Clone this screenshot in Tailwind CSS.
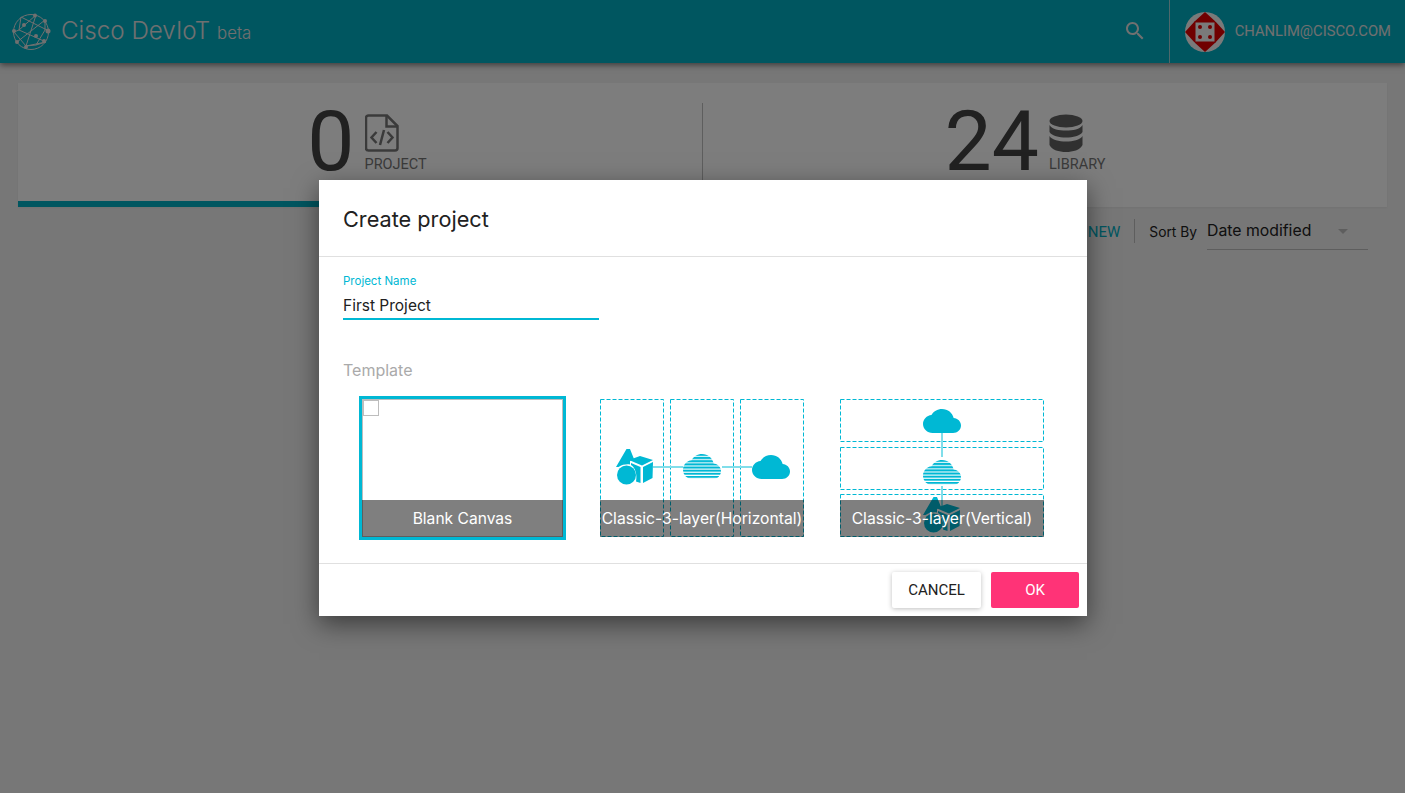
<!DOCTYPE html>
<html lang="en">

<head>
  <meta charset="UTF-8">
  <title>Cisco DevIoT</title>
  <script src="https://cdn.jsdelivr.net/npm/@tailwindcss/browser@4"></script>
</head>

<body class="bg-[#eeeeee] font-['Roboto',sans-serif] text-[#212121]">
  <!-- shared icons -->
  <svg class="absolute w-0 h-0">
    <defs>
      <pattern id="stripes" width="24" height="2" patternUnits="userSpaceOnUse">
        <rect width="24" height="1.300" fill="#00b8d4"></rect>
      </pattern>
      <symbol id="cloud" viewBox="0 4 24 16" preserveAspectRatio="none">
        <path d="M19.35 10.04C18.67 6.59 15.64 4 12 4 9.11 4 6.6 5.64 5.35 8.04 2.34 8.36 0 10.91 0 14c0 3.31 2.69 6 6 6h13c2.76 0 5-2.24 5-5 0-2.64-2.05-4.78-4.65-4.96z"></path>
      </symbol>
      <symbol id="things" viewBox="0 0 38 36">
        <path d="M10.500 0 14 0 18 10 14 12 14 15.500C11 15 6 15.500 2.500 18H0Z"></path>
        <circle cx="10.500" cy="26" r="9.500"></circle>
        <path d="M13 11 24 7 37 11 26 16.500Z"></path>
        <path d="M15 14 24.500 18V34L20 32.500C21.500 25 19 18.500 15 16Z"></path>
        <path d="M27 18 37 13 36.500 29 27 34Z"></path>
      </symbol>
    </defs>
  </svg>

  <div class="h-[793px] w-[1405px] overflow-hidden relative">
    <header class="h-[63px] bg-[#00acc1] flex items-center shadow-[0_2px_6px_rgba(0,0,0,0.5)]">
      <svg class="w-[40px] h-[40px] ml-[11px]" viewBox="0 0 40 40" fill="none" stroke="#e0e0e0" stroke-width="1">
        <circle cx="20" cy="20" r="17.500"></circle>
        <path d="M10 5 36 18M25 3 8 18 3 20 15 34 25 3M8 18 35 30 15 34M34 8 34 18 25 33 15 34M6 30 34 8M25 33 35 30M10 5 8 18"></path>
        <g fill="#e0e0e0" stroke="none">
          <circle cx="13" cy="13" r="2"></circle><circle cx="24" cy="3.500" r="2"></circle><circle cx="34" cy="9" r="2"></circle><circle cx="37" cy="19" r="2.500"></circle><circle cx="3" cy="19" r="2"></circle><circle cx="25" cy="24" r="2"></circle><circle cx="33" cy="29" r="2"></circle><circle cx="15" cy="35" r="2"></circle><circle cx="6" cy="30" r="2"></circle>
        </g>
      </svg>
      <div class="ml-[10px] text-[24.200px] text-[#e0e0e0] font-['Inter',sans-serif] font-light">Cisco DevIoT</div>
      <div class="ml-[7px] mt-[4px] text-[16.800px] text-[#e0e0e0] font-['Inter',sans-serif] font-light">beta</div>
      <svg class="w-[24px] h-[24px] ml-auto mb-[2px]" viewBox="0 0 24 24" fill="#e0e0e0">
        <path d="M15.500 14h-.79l-.28-.27C15.410 12.590 16 11.110 16 9.500 16 5.910 13.090 3 9.500 3S3 5.910 3 9.500 5.910 16 9.500 16c1.610 0 3.090-.59 4.230-1.570l.27.28v.79l5 4.990L20.490 19l-4.990-5zm-6 0C7.010 14 5 11.990 5 9.500S7.010 5 9.500 5 14 7.010 14 9.500 11.990 14 9.500 14z"></path>
      </svg>
      <div class="w-px h-[63px] bg-[#e0e0e0]/70 ml-[22px]"></div>
      <svg class="w-[40px] h-[40px] ml-[15px] rounded-full" viewBox="0 0 40 40">
        <rect width="40" height="40" fill="#f5f5f5"></rect>
        <path d="M20 0 31 10H9ZM20 40 31 30H9ZM0 20 10 9V31ZM40 20 30 9V31Z" fill="#e00000"></path>
        <rect x="10" y="10" width="20" height="20" fill="#f5f5f5" stroke="#e00000" stroke-width="1"></rect>
        <g fill="#e00000"><circle cx="15" cy="15" r="2"></circle><circle cx="25" cy="15" r="2"></circle><circle cx="15" cy="25" r="2"></circle><circle cx="25" cy="25" r="2"></circle></g>
      </svg>
      <div class="ml-[10px] mr-[14px] text-[14.750px] text-[#e0e0e0]">CHANLIM@CISCO.COM</div>
    </header>

    <main class="px-[18px] pt-[20px]">
      <div class="h-[124px] bg-[#fafafa] flex shadow-[0_1px_2px_rgba(0,0,0,0.05)]">
        <div class="w-[684px] h-[124px] border-b-[6px] border-[#00acc1] flex justify-center pl-[14px]">
          <div class="text-[84px] leading-[118px] text-[#424242]">0</div>
          <div class="ml-[10px] pt-[31px] flex flex-col text-[#757575]">
            <svg class="w-[34px] h-[39px]" viewBox="0 0 34 39" fill="none" stroke="#757575" stroke-width="2.500">
              <path d="M3.500 1.500H22L32.500 12V34a2.500 2.500 0 0 1-2.500 2.500H3.500A2.500 2.500 0 0 1 1 34V4A2.500 2.500 0 0 1 3.500 1.500Z"></path>
              <path d="M21.500 2V12.500H32M11.500 18 6.500 23.500 11.500 29M22.500 18 27.500 23.500 22.500 29M19 16 15 31"></path>
            </svg>
            <div class="text-[14.500px] leading-[20px] mt-[2px]">PROJECT</div>
          </div>
        </div>
        <div class="w-px h-[77px] bg-[#bdbdbd] mt-[20px]"></div>
        <div class="flex-1 flex justify-center">
          <div class="text-[84px] leading-[118px] text-[#424242] ml-[-40px]">24</div>
          <div class="ml-[10px] pt-[31px] flex flex-col text-[#757575]">
            <svg class="w-[34px] h-[39px]" viewBox="0 0 34 39" fill="#616161">
              <ellipse cx="17" cy="7" rx="16.500" ry="6.500"></ellipse>
              <path d="M.5 11C3 15.500 10 16.500 17 16.500S31 15.500 33.500 11V18C31 22 24 23.500 17 23.500S3 22 .5 18Z"></path>
              <path d="M.5 22C3 26 10 27.500 17 27.500S31 26 33.500 22V31C31 36 24 38 17 38S3 36 .5 31Z"></path>
            </svg>
            <div class="text-[14.500px] leading-[20px] mt-[2px]">LIBRARY</div>
          </div>
        </div>
      </div>

      <div class="flex justify-end items-start h-[40px] mt-[12px] pr-[19px]">
        <div class="text-[15px] leading-[24px] mt-[1px] text-[#00acc1] mr-[14px]">NEW</div>
        <div class="w-px h-[24px] bg-[#bdbdbd]"></div>
        <div class="text-[13.800px] leading-[24px] mt-[1px] ml-[14px] mr-[10px] font-['Inter',sans-serif]">Sort By</div>
        <div class="w-[161px] h-[31px] border-b border-[#bdbdbd] flex items-start justify-between text-[15.800px] leading-[24px] pr-[20px] font-['Inter',sans-serif]">
          <span>Date modified</span>
          <span class="mt-[10px] border-x-[5px] border-t-[5px] border-x-transparent border-t-[#bdbdbd]"></span>
        </div>
      </div>
    </main>

    <!-- modal -->
    <div class="absolute inset-0 bg-black/50">
      <div class="absolute left-[319px] top-[180px] w-[768px] h-[436px] bg-white flex flex-col shadow-[0_8px_24px_rgba(0,0,0,0.5)]">
        <div class="h-[77px] border-b border-[#e0e0e0] px-[24px] flex items-center">
          <h1 class="text-[21.700px] font-['Inter',sans-serif] mt-[2px]">Create project</h1>
        </div>
        <div class="h-[306px] px-[24px] pt-[17px]">
          <div class="w-[256px] border-b-2 border-[#00b8d4] h-[46px]">
            <div class="text-[11.500px] leading-[14px] text-[#00b8d4] font-['Inter',sans-serif]">Project Name</div>
            <div class="text-[15.500px] leading-[24px] mt-[6px] font-['Inter',sans-serif]">First Project</div>
          </div>
          <div class="text-[16px] text-[#aaaaaa] mt-[38px] font-['Inter',sans-serif]">Template</div>

          <div class="flex mt-[14px] ml-[16px]">
            <div class="relative w-[207px] h-[144px] border-[3px] border-[#00b8d4]">
              <div class="h-full border border-[#bdbdbd]">
                <div class="w-[16px] h-[16px] border border-[#bdbdbd]"></div>
              </div>
              <div class="absolute left-0 right-0 bottom-0 h-[37px] bg-black/50 text-white text-[15.600px] font-['Inter',sans-serif] flex items-center justify-center">Blank Canvas</div>
            </div>

            <div class="relative w-[204px] h-[139px] ml-[34px] mt-[3px] flex justify-between">
              <svg class="w-[64px] h-[138px]"><rect x=".5" y=".5" width="63" height="137" fill="none" stroke="#00b8d4" stroke-dasharray="4 2"></rect></svg>
              <svg class="w-[64px] h-[138px]"><rect x=".5" y=".5" width="63" height="137" fill="none" stroke="#00b8d4" stroke-dasharray="4 2"></rect></svg>
              <svg class="w-[64px] h-[138px]"><rect x=".5" y=".5" width="63" height="137" fill="none" stroke="#00b8d4" stroke-dasharray="4 2"></rect></svg>
              <div class="absolute left-[53px] top-[67px] w-[30px] h-[2px] bg-[#80deea]"></div>
              <div class="absolute left-[122px] top-[67px] w-[30px] h-[2px] bg-[#80deea]"></div>
              <svg class="absolute left-[16px] top-[50px] w-[38px] h-[36px] fill-[#00b8d4]"><use href="#things"></use></svg>
              <svg class="absolute left-[83px] top-[55px] w-[38px] h-[25px]" viewBox="0 4 24 16" preserveAspectRatio="none"><path fill="url(#stripes)" d="M19.35 10.04C18.67 6.59 15.64 4 12 4 9.11 4 6.6 5.64 5.35 8.04 2.34 8.36 0 10.91 0 14c0 3.31 2.69 6 6 6h13c2.76 0 5-2.24 5-5 0-2.64-2.05-4.78-4.65-4.96z"></path></svg>
              <svg class="absolute left-[152px] top-[56px] w-[38px] h-[24px] fill-[#00b8d4]"><use href="#cloud"></use></svg>
              <div class="absolute left-0 right-0 top-[101px] h-[37px] bg-black/50 text-white text-[15.700px] font-['Inter',sans-serif] flex items-center justify-center whitespace-nowrap">Classic-3-layer(Horizontal)</div>
            </div>

            <div class="relative w-[204px] h-[139px] ml-[36px] mt-[3px] flex flex-col gap-[4.500px]">
              <svg class="w-[204px] h-[43px]"><rect x=".5" y=".5" width="203" height="42" fill="none" stroke="#00b8d4" stroke-dasharray="4 2"></rect></svg>
              <svg class="w-[204px] h-[43px]"><rect x=".5" y=".5" width="203" height="42" fill="none" stroke="#00b8d4" stroke-dasharray="4 2"></rect></svg>
              <svg class="w-[204px] h-[43px]"><rect x=".5" y=".5" width="203" height="42" fill="none" stroke="#00b8d4" stroke-dasharray="4 2"></rect></svg>
              <div class="absolute left-[101px] top-[34px] w-[2px] h-[24px] bg-[#80deea]"></div>
              <div class="absolute left-[101px] top-[87px] w-[2px] h-[20px] bg-[#80deea]"></div>
              <svg class="absolute left-[83px] top-[10px] w-[38px] h-[24px] fill-[#00b8d4]"><use href="#cloud"></use></svg>
              <svg class="absolute left-[83px] top-[61px] w-[38px] h-[25px]" viewBox="0 4 24 16" preserveAspectRatio="none"><path fill="url(#stripes)" d="M19.35 10.04C18.67 6.59 15.64 4 12 4 9.11 4 6.6 5.64 5.35 8.04 2.34 8.36 0 10.91 0 14c0 3.31 2.69 6 6 6h13c2.76 0 5-2.24 5-5 0-2.64-2.05-4.78-4.65-4.96z"></path></svg>
              <svg class="absolute left-[83px] top-[98px] w-[38px] h-[36px] fill-[#00b8d4]"><use href="#things"></use></svg>
              <div class="absolute left-0 right-0 top-[101px] h-[37px] bg-black/50 text-white text-[15.700px] font-['Inter',sans-serif] flex items-center justify-center whitespace-nowrap">Classic-3-layer(Vertical)</div>
            </div>
          </div>
        </div>
        <div class="flex-1 border-t border-[#e0e0e0] flex justify-end items-start pt-[8px] pr-[8px] gap-[10px]">
          <button class="w-[89px] h-[36px] bg-white rounded-[2px] text-[15px] shadow-[0_1px_5px_rgba(0,0,0,0.25)]">CANCEL</button>
          <button class="w-[88px] h-[36px] bg-[#ff3377] rounded-[2px] text-[15px] text-white">OK</button>
        </div>
      </div>
    </div>
  </div>
</body>

</html>
